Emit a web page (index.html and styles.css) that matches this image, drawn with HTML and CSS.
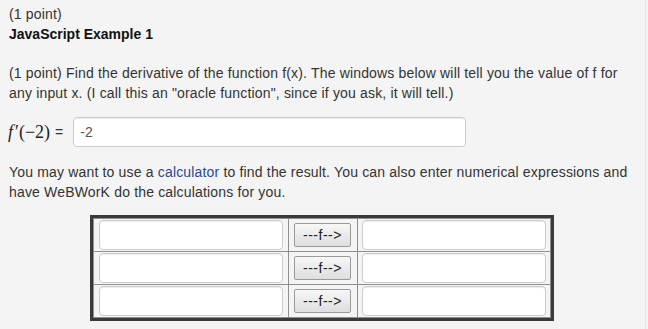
FILE: index.html
```html
<!DOCTYPE html>
<html lang="en">
<head>
    <meta charset="UTF-8">
    <title>JavaScript Example 1</title>
    <link rel="stylesheet" href="styles.css">
</head>
<body>

<div class="page">
    <div class="problem-head">
        <div class="points">(1 point)</div>
        <div class="title">JavaScript Example 1</div>
    </div>

    <p class="prompt">(1 point) Find the derivative of the function f(x). The windows below will tell you the value of f for any input x. (I call this an "oracle function", since if you ask, it will tell.)</p>

    <div class="answer-row">
        <span class="math"><i>f</i>&#8242;(&minus;2)</span>
        <span class="eq">=</span>
        <input type="text" class="answer" value="-2">
    </div>

    <p class="hint">You may want to use a <a href="#">calculator</a> to find the result. You can also enter numerical expressions and have WeBWorK do the calculations for you.</p>

    <table class="oracle">
        <tr>
            <td class="cell-in"><input type="text" class="field"></td>
            <td class="cell-btn"><button class="eval">---f--&gt;</button></td>
            <td class="cell-out"><input type="text" class="field"></td>
        </tr>
        <tr>
            <td class="cell-in"><input type="text" class="field"></td>
            <td class="cell-btn"><button class="eval">---f--&gt;</button></td>
            <td class="cell-out"><input type="text" class="field"></td>
        </tr>
        <tr>
            <td class="cell-in"><input type="text" class="field"></td>
            <td class="cell-btn"><button class="eval">---f--&gt;</button></td>
            <td class="cell-out"><input type="text" class="field"></td>
        </tr>
    </table>
</div>

</body>
</html>
```

FILE: styles.css
```css
body {
    margin: 0;
    padding: 0;
    background-color: #f4f4f4;
    font-family: "Liberation Sans", Arial, sans-serif;
    font-size: 14px;
    line-height: 20px;
    color: #333;
}
.page {
    width: 621px;
    padding: 4px 15px 0 9px;
    border-right: 1px solid #e4e4e4;
    min-height: 325px;
}
.points {
    color: #333;
    letter-spacing: 0.17px;
}
.title {
    font-weight: bold;
    color: #111;
}
.prompt {
    margin: 19px 0 14px 0;
    letter-spacing: 0.17px;
}
.answer-row {
    display: flex;
    align-items: center;
    height: 30px;
    margin-bottom: 15px;
}
.math {
    font-family: "Liberation Serif", "Times New Roman", serif;
    font-size: 18px;
    color: #222;
    margin-left: -1px;
}
.math i {
    margin-right: 2px;
}
.eq {
    margin-left: 5px;
    margin-right: 10px;
}
.answer {
    box-sizing: border-box;
    width: 393px;
    height: 30px;
    padding: 4px 6px;
    font-family: "Liberation Sans", Arial, sans-serif;
    font-size: 14px;
    color: #555;
    background-color: white;
    border: 1px solid #ccc;
    border-radius: 4px;
    box-shadow: inset 0 1px 1px rgba(0, 0, 0, 0.075);
}
.hint {
    margin: 0 0 13px 0;
    letter-spacing: 0.17px;
}
.hint a {
    color: #2b4a91;
    text-decoration: none;
}
.oracle {
    margin: 0 0 0 81px;
    border: 3px solid #3a3a3a;
    border-collapse: separate;
    border-spacing: 0;
}
.oracle td {
    border-left: 1px solid #8f8f8f;
    border-top: 1px solid #8f8f8f;
    padding: 1px 5px;
    vertical-align: middle;
}
.oracle td.cell-out {
    border-right: 1px solid #8f8f8f;
    padding: 1px 4px;
}
.oracle td.cell-btn {
    padding: 1px 6px 1px 5px;
    text-align: center;
}
.oracle tr:last-child td {
    border-bottom: 1px solid #8f8f8f;
}
.field {
    display: block;
    box-sizing: border-box;
    width: 184px;
    height: 30px;
    background-color: white;
    border: 1px solid #ccc;
    border-radius: 4px;
    box-shadow: inset 0 1px 1px rgba(0, 0, 0, 0.075);
}
.eval {
    display: block;
    box-sizing: border-box;
    width: 57px;
    height: 24px;
    padding: 0;
    font-family: "Liberation Sans", Arial, sans-serif;
    font-size: 14px;
    letter-spacing: 0.5px;
    color: #222;
    background: linear-gradient(#f7f7f7, #dedede);
    border: 1px solid #9a9a9a;
    border-radius: 2px;
}
```
